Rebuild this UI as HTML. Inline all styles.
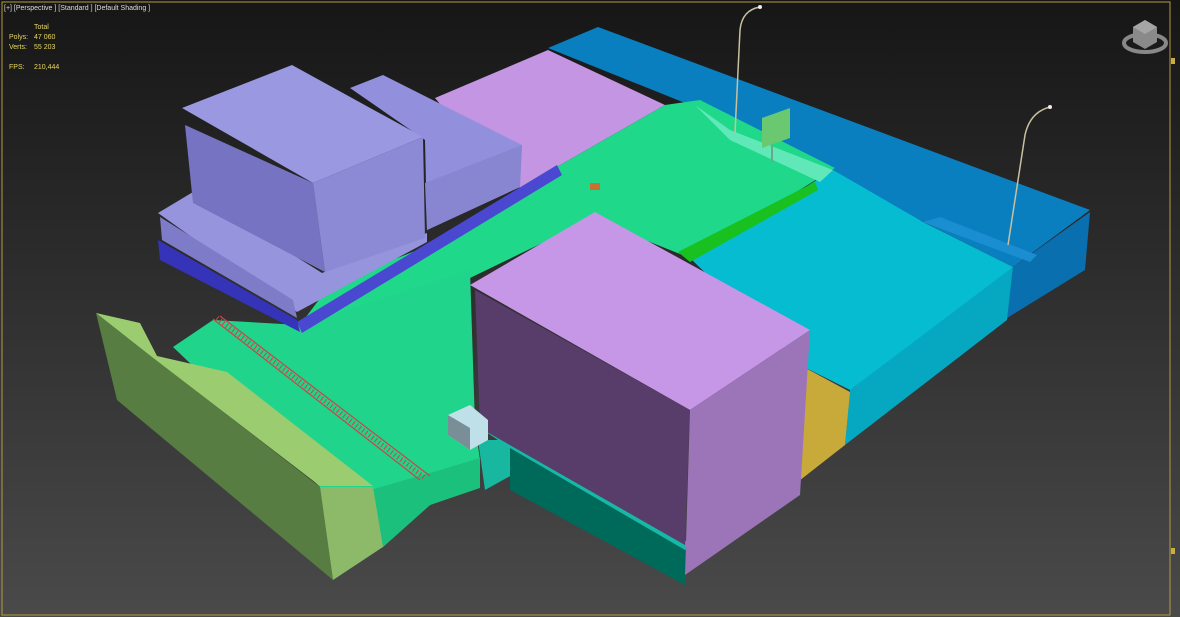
<!DOCTYPE html>
<html><head><meta charset="utf-8"><style>
html,body{margin:0;padding:0;width:1180px;height:617px;overflow:hidden;background:#222}
svg{display:block}
.t{font-family:"Liberation Sans",sans-serif;font-size:7px}
</style></head><body>
<svg width="1180" height="617" viewBox="0 0 1180 617">
<defs><linearGradient id="bg" x1="0" y1="0" x2="0" y2="1">
<stop offset="0" stop-color="#161616"/><stop offset="1" stop-color="#4a4a4a"/></linearGradient></defs>
<rect width="1180" height="617" fill="url(#bg)"/>
<polygon points="548,48 598,27 1090,210 1013,267 690,105" fill="#0a7fbf"/>
<polygon points="1013,267 1090,212 1085,270 1007,318" fill="#0a6fae"/>
<polygon points="690,258 833,170 923,222 1013,267 1007,275 850,390 800,365" fill="#05bcd0"/>
<polygon points="850,390 1013,267 1007,320 845,445" fill="#05a8c0"/>
<polygon points="923,222 940,217 1037,255 1030,262" fill="#1a8ed0"/>
<polygon points="800,365 850,392 845,445 790,488" fill="#c8aa3a"/>
<polygon points="435,98 548,50 665,105 520,188 445,110" fill="#c495e2"/>
<polygon points="520,188 665,105 700,100 835,168 690,258 640,238 600,215 470,278 300,325 330,285 430,245" fill="#1fd88a"/>
<polygon points="695,105 730,130 833,170 820,182 730,140" fill="#60e8b8"/>
<polygon points="678,252 815,182 818,190 690,262" fill="#18c020"/>
<polygon points="173,347 213,320 300,325 470,270 475,425 480,460 480,487 430,505 383,547 320,487" fill="#20d48c"/>
<polygon points="370,490 440,470 480,458 480,488 430,505 383,547" fill="#1bc07c"/>
<polygon points="478,440 515,440 512,475 485,490" fill="#18b8a0"/>
<g stroke="#c44" stroke-width="1.2"><line x1="213" y1="319" x2="420" y2="480"/><line x1="220" y1="316" x2="430" y2="476"/></g>
<line x1="217" y1="318" x2="425" y2="478" stroke="#c44" stroke-width="5" stroke-dasharray="1 3"/>
<polygon points="96,313 117,400 333,580 320,487" fill="#577d42"/>
<polygon points="320,487 333,580 383,547 373,487" fill="#8cba68"/>
<polygon points="96,313 140,323 157,356 227,372 373,486 320,486 152,357" fill="#9ccc70"/>
<polygon points="297,322 557,165 562,175 302,333" fill="#4a48d0"/>
<polygon points="158,240 297,320 300,332 160,260" fill="#3533b8"/>
<polygon points="158,213 193,192 322,273 427,233 427,242 297,312" fill="#9594dc"/>
<polygon points="160,217 293,300 297,318 162,240" fill="#7e7cc8"/>
<polygon points="350,88 383,75 522,145 520,187 427,230 425,140" fill="#9290dc"/>
<polygon points="425,183 522,145 520,187 427,230" fill="#8886d0"/>
<polygon points="182,108 292,65 423,137 313,183" fill="#9a98e0"/>
<polygon points="185,125 313,183 325,272 193,203" fill="#7674c2"/>
<polygon points="313,183 423,137 425,238 325,272" fill="#8c8ad4"/>
<polygon points="510,445 685,545 685,585 510,490" fill="#006a5a"/>
<polygon points="480,428 515,440 685,540 690,548 685,550 510,448" fill="#16b8a6"/>
<polygon points="470,285 595,212 810,330 690,410" fill="#c697e6"/>
<polygon points="475,290 690,410 685,545 480,428" fill="#583c6a"/>
<polygon points="690,410 810,330 800,495 685,575" fill="#9c74b8"/>
<polygon points="448,415 470,405 488,420 488,440 470,450 448,435" fill="#bfe0e8"/>
<polygon points="448,415 470,428 470,450 448,435" fill="#7a8e98"/>
<polygon points="762,118 790,108 790,138 762,148" fill="#6ac870"/>
<line x1="772" y1="145" x2="772" y2="162" stroke="#6a8" stroke-width="2"/>
<path d="M735,133 L740,30 Q742,10 760,7" stroke="#c8c0a0" stroke-width="1.5" fill="none"/>
<path d="M1008,245 L1025,135 Q1030,112 1050,107" stroke="#c8c0a0" stroke-width="1.5" fill="none"/>
<circle cx="760" cy="7" r="2" fill="#eee"/><circle cx="1050" cy="107" r="2" fill="#eee"/>
<rect x="590" y="183" width="10" height="7" fill="#c87030"/>
<rect x="2" y="2" width="1168" height="613" fill="none" stroke="#b89a3a" stroke-width="1"/>
<text class="t" x="4" y="10" fill="#ddd">[+] [Perspective ] [Standard ] [Default Shading ]</text>
<text class="t" x="34" y="29" fill="#e8d860">Total</text>
<text class="t" x="9" y="39" fill="#e8d860">Polys:</text><text class="t" x="34" y="39" fill="#e8d860">47 060</text>
<text class="t" x="9" y="49" fill="#e8d860">Verts:</text><text class="t" x="34" y="49" fill="#e8d860">55 203</text>
<text class="t" x="9" y="69" fill="#e8d860">FPS:</text><text class="t" x="34" y="69" fill="#e8d860">210,444</text>
<ellipse cx="1145" cy="43" rx="21" ry="9" fill="none" stroke="#888" stroke-width="4"/>
<polygon points="1133,27 1145,20 1157,27 1157,42 1145,49 1133,42" fill="#8a8a8a"/>
<polygon points="1133,27 1145,20 1157,27 1145,34" fill="#a5a5a5"/>
<rect x="1171" y="58" width="4" height="6" fill="#c8b040"/>
<rect x="1171" y="548" width="4" height="6" fill="#c8b040"/>
</svg>
</body></html>
